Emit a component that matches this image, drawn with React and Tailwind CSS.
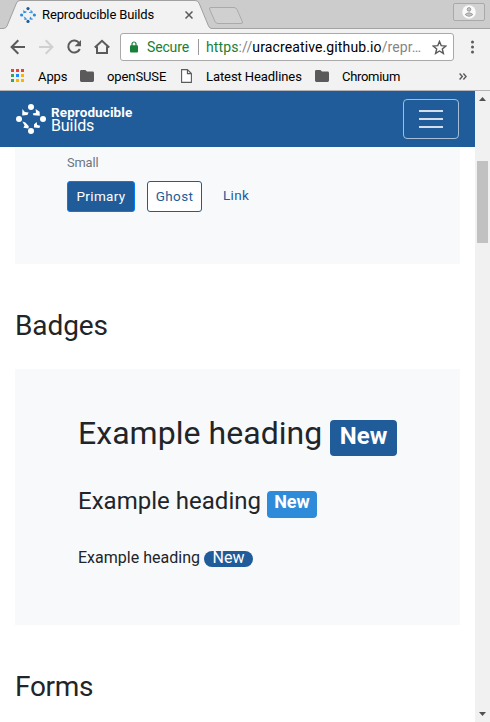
const UI_FONT = "font-[Roboto,'Liberation_Sans',sans-serif]";

function PeopleRing({ className, head, headAlt, body, bodyAlt }) {
  return (
    <svg className={className} viewBox="0 0 30 30">
      <g fill={head}>
        <circle cx="15" cy="3" r="3" />
        <circle cx="15" cy="27" r="3" />
      </g>
      <g fill={headAlt}>
        <circle cx="3" cy="15" r="3" />
        <circle cx="27" cy="15" r="3" />
      </g>
      <path d="M6.4 5 L8.8 8 L12.6 8.4 L11.4 11 L6.2 11.6 Z" fill={body} />
      <path d="M19.6 5 L23.6 7.8 L23.8 11.8 L17.4 11.2 L16.8 9.4 L20 8.8Z" fill={bodyAlt} />
      <path d="M6.4 17.6 L9.4 18.6 L12.8 22.2 L12.4 24.6 L7.4 23.8 L8.6 21.6 Z" fill={bodyAlt} />
      <path d="M20.6 18 L21.2 21 L24.2 21.8 L23.4 24 L18 23.6 L18 20.6 Z" fill={body} />
    </svg>
  );
}

function Folder() {
  return (
    <svg className="h-3 w-[14px] shrink-0" viewBox="0 0 14 12">
      <path d="M1.4 0 H5.4 L7 1.6 H12.6 Q14 1.6 14 3 V10.6 Q14 12 12.6 12 H1.4 Q0 12 0 10.6 V1.4 Q0 0 1.4 0Z" fill="#5a5a5a" />
    </svg>
  );
}

function TabStrip() {
  return (
    <div className="relative h-[29px] bg-[#cccccc]">
      <svg className="absolute inset-0 h-[29px] w-[490px]" viewBox="0 0 490 29">
        <path d="M0 28.5 H490" stroke="#a3a3a3" />
        <path d="M0 29 V28.5 H3 Q6 28.5 7 26 L16.5 3 Q17.5 .5 20 .5 H195 Q198 .5 199 3 L208.5 26 Q209.5 28.5 212 28.5 V29Z" fill="#f2f2f2" />
        <path d="M0 28.5 H3 Q6 28.5 7 26 L16.5 3 Q17.5 .5 20 .5 H195 Q198 .5 199 3 L208.5 26 Q209.5 28.5 212 28.5" fill="none" stroke="#a0a0a0" />
        <path d="M211 7.5 H234 Q236 7.5 237 9.5 L242.5 22 Q243 23.5 241 23.5 H218 Q216 23.5 215 21.5 L209.5 9 Q209 7.5 211 7.5Z" fill="#d0d0d0" stroke="#aaaaaa" />
      </svg>
      <div className="relative flex h-[29px] items-center pl-5">
        <PeopleRing className="size-4" head="#1f5c99" headAlt="#2e8bd9" body="#2e8bd9" bodyAlt="#4a9be0" />
        <span className="ml-[6px] w-[142px] text-[13px] leading-4 tracking-[-0.13px]">Reproducible Builds</span>
        <svg className="ml-[1px] size-2" viewBox="0 0 8 8" stroke="#5a5a5a" strokeWidth="1.5">
          <path d="M.5 .5 L7.5 7.5 M7.5 .5 L.5 7.5" />
        </svg>
        <div className="mr-[5px] ml-auto flex h-[18px] w-8 -translate-y-[3px] items-center justify-center rounded-[2px] border border-[#a9a9a9] bg-[#d2d2d2]">
          <svg className="size-[14px]" viewBox="0 0 14 14">
            <circle cx="7" cy="7" r="6.8" fill="#fafafa" />
            <circle cx="7" cy="4.4" r="1.8" fill="#c4c4c4" stroke="#8c8c8c" strokeWidth=".8" />
            <path d="M3.2 9.5 Q7 6.2 10.8 9.5 Q7 13 3.2 9.5Z" fill="#c4c4c4" stroke="#8c8c8c" strokeWidth=".8" />
          </svg>
        </div>
      </div>
    </div>
  );
}

function Toolbar() {
  return (
    <div className="flex h-[37px] items-center pb-px pl-[10px]">
      <svg className="h-4 w-[104px] shrink-0" viewBox="0 0 104 16" fill="none" strokeWidth="2">
        <path d="M15 8 H2 M8.3 1.3 L1.6 8 L8.3 14.7" stroke="#5a5a5a" />
        <path d="M29 8 H42 M35.7 1.3 L42.4 8 L35.7 14.7" stroke="#d0d0d0" />
        <path d="M69.3 4.2 A6 6 0 1 0 69.8 10" stroke="#5a5a5a" />
        <path d="M71 1 V7.2 H64.6Z" fill="#5a5a5a" />
        <path d="M84.8 8.6 L92 1.8 L99.2 8.6 M87 7.6 V14 H97 V7.6" stroke="#5a5a5a" />
      </svg>
      <div className="ml-[6px] flex h-7 w-[334px] items-center rounded-[3px] border border-[#a9a9a9] bg-white pl-[9px] text-[14px] leading-5">
        <svg className="h-3 w-2 shrink-0" viewBox="0 0 8 12">
          <path d="M2 5 V3 A2 2 0 0 1 6 3 V5" fill="none" stroke="#188038" strokeWidth="1.2" />
          <rect y="4.2" width="8" height="7.4" rx="1" fill="#188038" />
        </svg>
        <span className="ml-[9px] w-[51px] shrink-0 tracking-[-0.15px] text-[#188038]">Secure</span>
        <span className="h-4 w-px bg-[#9a9a9a]" />
        <span className="ml-[7px] w-[221px] shrink-0 tracking-[0.12px] whitespace-nowrap text-[#858585]">
          <span className="text-[#188038]">https</span>://<span className="text-black">uracreative.github.io</span>/repr…
        </span>
        <svg className="ml-[5px] size-[15px] shrink-0" viewBox="0 0 15 15">
          <path d="M7.5 1.4 L9.2 5.6 L13.8 6 L10.3 8.9 L11.4 13.4 L7.5 11 L3.6 13.4 L4.7 8.9 L1.2 6 L5.8 5.6Z" fill="none" stroke="#5a5a5a" strokeWidth="1.4" />
        </svg>
      </div>
      <svg className="ml-[17px] h-[14px] w-[3px]" viewBox="0 0 3 14" fill="#5a5a5a">
        <circle cx="1.5" cy="2" r="1.5" /><circle cx="1.5" cy="7" r="1.5" /><circle cx="1.5" cy="12" r="1.5" />
      </svg>
    </div>
  );
}

function Bookmarks() {
  return (
    <div className="flex h-[25px] items-center border-b border-[#b5b3b5] pb-[4px] pl-[11px] text-[13px] leading-4 whitespace-nowrap">
      <div className="-mt-px grid w-[13px] shrink-0 grid-cols-3 gap-[2px]">
        <i className="size-[3px] bg-[#ea4335]" /><i className="size-[3px] bg-[#ea4335]" /><i className="size-[3px] bg-[#ea4335]" />
        <i className="size-[3px] bg-[#34a853]" /><i className="size-[3px] bg-[#1a8cff]" /><i className="size-[3px] bg-[#fbb400]" />
        <i className="size-[3px] bg-[#34a853]" /><i className="size-[3px] bg-[#fbb400]" /><i className="size-[3px] bg-[#fbb400]" />
      </div>
      <span className="mt-[2px] ml-[14px] w-[42px] shrink-0 tracking-[-0.1px]">Apps</span>
      <Folder />
      <span className="mt-[2px] ml-[13px] w-[74px] shrink-0 tracking-[-0.1px]">openSUSE</span>
      <svg className="h-[14px] w-[11px] shrink-0" viewBox="0 0 11 14">
        <path d="M.6 .6 H6.4 L10.4 4.6 V13.4 H.6Z M6.4 .6 V4.6 H10.4" fill="#fff" stroke="#5a5a5a" strokeWidth="1.1" />
      </svg>
      <span className="mt-[2px] ml-[14px] w-[109px] shrink-0 tracking-[-0.08px]">Latest Headlines</span>
      <Folder />
      <span className="mt-[2px] ml-[13px] w-[117px] shrink-0 tracking-[-0.3px]">Chromium</span>
      <svg className="h-[7px] w-2 shrink-0" viewBox="0 0 8 7" fill="none" stroke="#5a5a5a" strokeWidth="1.4">
        <path d="M.6 .5 L3.3 3.5 L.6 6.5 M4.4 .5 L7.1 3.5 L4.4 6.5" />
      </svg>
    </div>
  );
}

function Navbar() {
  return (
    <nav className="flex h-14 items-center bg-[#1f5c99] pr-4 pl-4 text-white">
      <PeopleRing className="size-[30px]" head="#fff" headAlt="#fff" body="#fff" bodyAlt="#fff" />
      <div className="ml-[5px] whitespace-nowrap">
        <div className="text-[13.5px] leading-[13px] font-bold tracking-[0.1px]">Reproducible</div>
        <div className="text-[16px] leading-[14px] tracking-[-0.1px]">Builds</div>
      </div>
      <button className="ml-auto flex h-10 w-14 flex-col items-center justify-center gap-[6px] rounded-[4px] border border-[#a5bed6]">
        <i className="h-[2px] w-6 bg-[#d2dee9]" />
        <i className="h-[2px] w-6 bg-[#d2dee9]" />
        <i className="h-[2px] w-6 bg-[#d2dee9]" />
      </button>
    </nav>
  );
}

function Scrollbar() {
  return (
    <div className="flex w-[15px] shrink-0 flex-col items-center bg-[#f1f1f1]">
      <svg className="mt-[6px] h-1 w-[7px] shrink-0" viewBox="0 0 7 4"><path d="M0 4 L3.5 0 L7 4Z" fill="#505050" /></svg>
      <div className="mt-[60px] h-[82px] w-[11px] bg-[#c1c1c1]" />
      <svg className="mt-auto mb-[6px] h-1 w-[7px] shrink-0" viewBox="0 0 7 4"><path d="M0 0 L3.5 4 L7 0Z" fill="#505050" /></svg>
    </div>
  );
}

export default function App() {
  return (
    <div className={`flex h-[722px] w-[490px] flex-col overflow-hidden bg-[#f2f2f2] text-black ${UI_FONT}`}>
      <TabStrip />
      <Toolbar />
      <Bookmarks />
      <div className="flex h-[631px]">
        <main className="w-[475px] overflow-hidden bg-white text-[#212529]">
          <Navbar />
          <div className="px-[15px] whitespace-nowrap">
            <section className="h-[117px] bg-[#f8f9fb] pt-[6px] pl-[52px]">
              <div className="text-[12.8px] leading-5 tracking-[-0.1px] text-[#6c757d]">Small</div>
              <div className="mt-2 flex text-[13.5px] leading-[29px] tracking-[0.35px] text-[#1f5c99]">
                <button className="h-[31px] w-[68px] rounded-[3px] border border-[#007bff] bg-[#1f5c99] pb-px leading-[28px] text-white">Primary</button>
                <button className="ml-3 h-[31px] w-[55px] rounded-[3px] border border-[#1f5c99] bg-white pb-px leading-[28px]">Ghost</button>
                <a className="ml-[21px]">Link</a>
              </div>
            </section>
            <h2 className="mt-[45px] text-[28px] leading-[34px] tracking-[-0.1px]">Badges</h2>
            <section className="mt-[26px] h-[256px] bg-[#f8f9fb] pt-[44px] pl-[63px]">
              <h3 className="flex h-[45px] text-[32px] leading-[40px] tracking-[0.04px]">
                <span className="w-[252px]">Example heading</span>
                <span className="mt-[7px] h-9 w-[67px] rounded-[4px] bg-[#1f5c99] text-center text-[24px] leading-[33px] font-bold text-white">New</span>
              </h3>
              <h4 className="mt-[26px] flex h-[36px] text-[24px] leading-[34px] tracking-[0.02px]">
                <span className="w-[189px]">Example heading</span>
                <span className="mt-[7px] h-[27px] w-[50px] rounded-[4px] bg-[#2e8bd9] text-center text-[18px] leading-[22px] font-bold text-white">New</span>
              </h4>
              <p className="mt-[26px] flex text-[16px] leading-6 tracking-[0.02px]">
                <span className="w-[126px]">Example heading</span>
                <span className="mt-[5px] h-4 w-[49px] rounded-full bg-[#1f5c99] text-center leading-[14px] text-white">New</span>
              </p>
            </section>
            <h2 className="mt-[45px] text-[28px] leading-[34px] tracking-[-0.3px]">Forms</h2>
          </div>
        </main>
        <Scrollbar />
      </div>
    </div>
  );
}
